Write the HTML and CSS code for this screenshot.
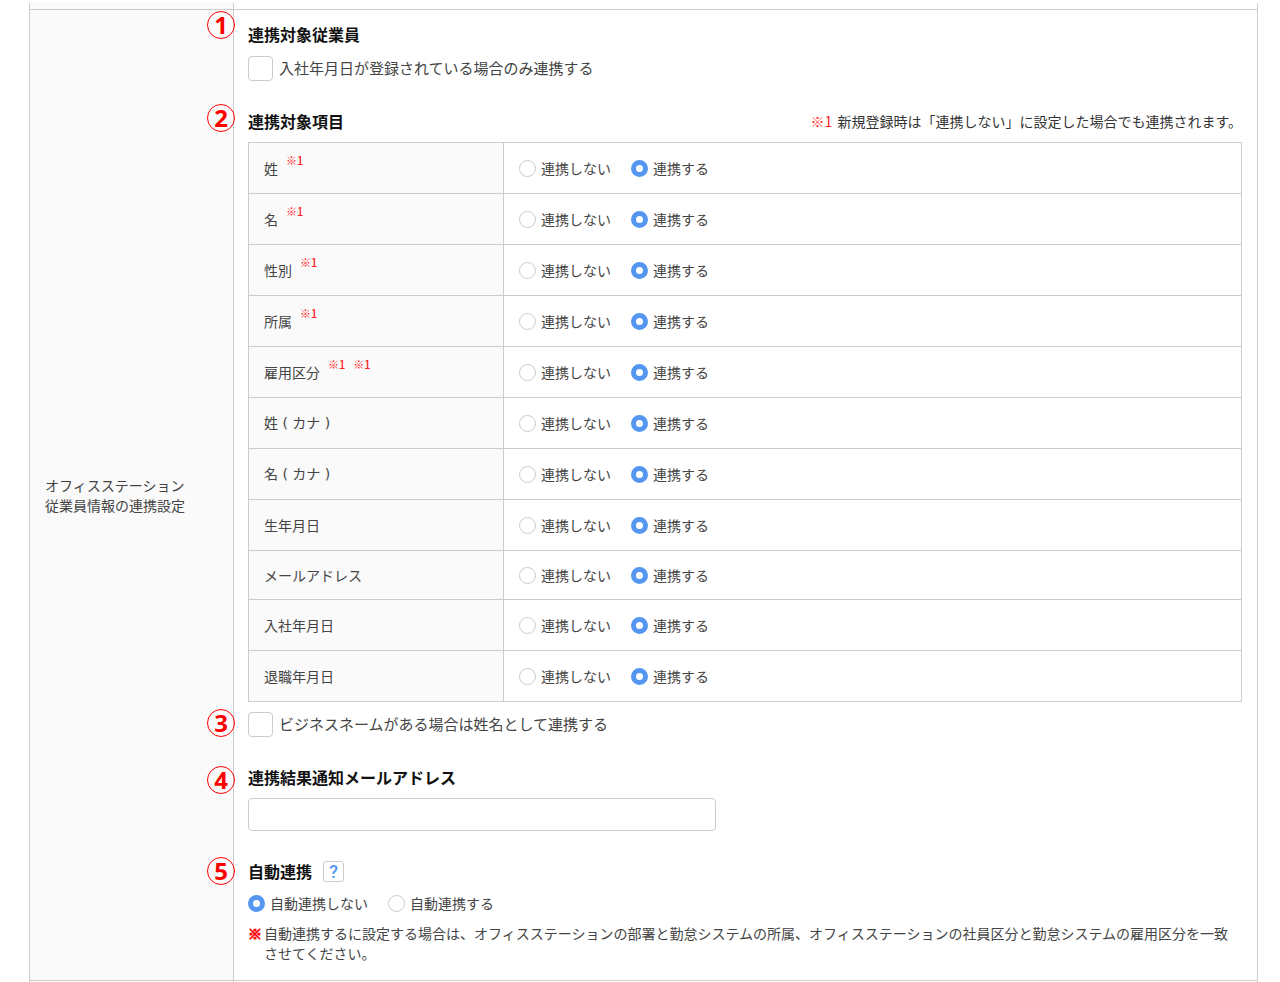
FILE: index.html
```html
<!DOCTYPE html>
<html lang="ja">
<head>
<meta charset="utf-8">
<meta name="viewport" content="width=device-width, initial-scale=1">
<title>オフィスステーション従業員情報の連携設定</title>
<link rel="stylesheet" href="styles.css">
</head>
<body>
<main class="settings">
  <div class="edge edge-top"><div class="edge-label"></div></div>
  <div class="row">
    <div class="row-label">オフィスステーション<br>従業員情報の連携設定</div>
    <div class="row-body">
      <section class="block">
        <span class="badge badge-raised">1</span>
        <h2 class="heading">連携対象従業員</h2>
        <label class="check"><input type="checkbox">入社年月日が登録されている場合のみ連携する</label>
      </section>

      <section class="block">
        <span class="badge badge-top">2</span>
        <div class="heading-row">
          <h2 class="heading">連携対象項目</h2>
          <p class="remark"><span class="red">※1</span> 新規登録時は「連携しない」に設定した場合でも連携されます。</p>
        </div>
        <table class="items">
          <tbody>
            <tr><th scope="row">姓<sup>※1</sup></th><td><div class="radios"><label class="radio"><input type="radio" name="sei">連携しない</label><label class="radio"><input type="radio" name="sei" checked>連携する</label></div></td></tr>
            <tr><th scope="row">名<sup>※1</sup></th><td><div class="radios"><label class="radio"><input type="radio" name="mei">連携しない</label><label class="radio"><input type="radio" name="mei" checked>連携する</label></div></td></tr>
            <tr><th scope="row">性別<sup>※1</sup></th><td><div class="radios"><label class="radio"><input type="radio" name="gender">連携しない</label><label class="radio"><input type="radio" name="gender" checked>連携する</label></div></td></tr>
            <tr><th scope="row">所属<sup>※1</sup></th><td><div class="radios"><label class="radio"><input type="radio" name="dept">連携しない</label><label class="radio"><input type="radio" name="dept" checked>連携する</label></div></td></tr>
            <tr><th scope="row">雇用区分<sup>※1</sup><sup>※1</sup></th><td><div class="radios"><label class="radio"><input type="radio" name="employment">連携しない</label><label class="radio"><input type="radio" name="employment" checked>連携する</label></div></td></tr>
            <tr><th class="kana" scope="row">姓 ( カナ )</th><td><div class="radios"><label class="radio"><input type="radio" name="sei-kana">連携しない</label><label class="radio"><input type="radio" name="sei-kana" checked>連携する</label></div></td></tr>
            <tr><th class="kana" scope="row">名 ( カナ )</th><td><div class="radios"><label class="radio"><input type="radio" name="mei-kana">連携しない</label><label class="radio"><input type="radio" name="mei-kana" checked>連携する</label></div></td></tr>
            <tr><th scope="row">生年月日</th><td><div class="radios"><label class="radio"><input type="radio" name="birth">連携しない</label><label class="radio"><input type="radio" name="birth" checked>連携する</label></div></td></tr>
            <tr class="compact"><th scope="row">メールアドレス</th><td><div class="radios"><label class="radio"><input type="radio" name="mail">連携しない</label><label class="radio"><input type="radio" name="mail" checked>連携する</label></div></td></tr>
            <tr><th scope="row">入社年月日</th><td><div class="radios"><label class="radio"><input type="radio" name="joined">連携しない</label><label class="radio"><input type="radio" name="joined" checked>連携する</label></div></td></tr>
            <tr><th scope="row">退職年月日</th><td><div class="radios"><label class="radio"><input type="radio" name="left">連携しない</label><label class="radio"><input type="radio" name="left" checked>連携する</label></div></td></tr>
          </tbody>
        </table>
        <div class="business">
          <span class="badge">3</span>
          <label class="check"><input type="checkbox">ビジネスネームがある場合は姓名として連携する</label>
        </div>
      </section>

      <section class="block">
        <span class="badge badge-low">4</span>
        <h2 class="heading"><label for="notify">連携結果通知メールアドレス</label></h2>
        <input class="text" id="notify" type="email">
      </section>

      <section class="block">
        <span class="badge">5</span>
        <div class="heading-row heading-help">
          <h2 class="heading">自動連携</h2>
          <button class="help" type="button">?</button>
        </div>
        <div class="radios">
          <label class="radio"><input type="radio" name="auto" checked>自動連携しない</label>
          <label class="radio"><input type="radio" name="auto">自動連携する</label>
        </div>
        <p class="caution"><b class="mark">※</b><span>自動連携するに設定する場合は、オフィスステーションの部署と勤怠システムの所属、オフィスステーションの社員区分と勤怠システムの雇用区分を一致させてください。</span></p>
      </section>
    </div>
  </div>
  <div class="edge"><div class="edge-label"></div></div>
</main>
</body>
</html>
```

FILE: styles.css
```css
* {
  box-sizing: border-box;
}

body {
  margin: 0;
  background: #fff;
  color: #444;
  font: 14px/20px "Noto Sans CJK JP", sans-serif;
}

h2,
p {
  margin: 0;
}

.settings {
  margin: 3px 22px 0 29px;
  border: solid #ccc;
  border-width: 0 1px;
}

.edge,
.row {
  display: grid;
  grid-template-columns: 204px 1fr;
}

.edge {
  height: 2px;
}

.edge-top {
  height: 6px;
}

.edge-label,
.row-label {
  border-right: 1px solid #ccc;
  background: #fafafa;
}

.row {
  border: solid #ccc;
  border-width: 1px 0;
}

.row-label {
  display: flex;
  align-items: center;
  padding-left: 15px;
}

.row-body {
  display: grid;
  gap: 28px;
  padding: 12px 15px 17px 14px;
}

.block,
.business {
  position: relative;
}

.heading {
  color: #111;
  font-size: 16px;
  font-weight: 700;
  line-height: 24px;
  margin-bottom: 9px;
}

.heading-row {
  display: flex;
  justify-content: space-between;
}

.heading-help {
  justify-content: flex-start;
  gap: 11px;
  margin-bottom: 1px;
}

.remark {
  color: #333;
  line-height: 24px;
}

.red,
sup {
  color: #f22;
}

.red {
  margin-right: 2px;
}

/* Numbered callouts laid over the column border */
.badge {
  position: absolute;
  top: -2px;
  left: -41px;
  width: 28px;
  height: 28px;
  border: 1px solid #f00;
  border-radius: 50%;
  color: #f00;
  font: 700 24px/26px "Noto Sans", sans-serif;
  text-align: center;
}

.badge-top {
  top: -5px;
}

.badge-raised {
  top: -11px;
}

.badge-low {
  top: 1px;
}

.check {
  display: flex;
  align-items: center;
  gap: 6px;
  height: 26px;
  width: fit-content;
  font-size: 15px;
}

.check input {
  appearance: none;
  flex: none;
  width: 25px;
  height: 25px;
  margin: 0;
  border: 1px solid #ccc;
  border-radius: 4px;
  background: #fff;
}

.check input:checked {
  background: #5596f0;
}

.items {
  width: 100%;
  border-collapse: collapse;
  table-layout: fixed;
}

.items th,
.items td {
  height: 51px;
  padding: 0 15px;
  border: 1px solid #ccc;
  text-align: left;
  font-weight: 400;
}

.items th {
  width: 255px;
  background: #fafafa;
}

.items .kana {
  font-family: "DejaVu Sans", "Noto Sans CJK JP", sans-serif;
}

.items .compact th,
.items .compact td {
  height: 49px;
}

sup {
  margin-left: 8px;
  font-size: 11px;
  font-weight: 500;
  line-height: 0;
  vertical-align: 9px;
}

.radios {
  display: flex;
  gap: 20px;
}

.radio {
  display: flex;
  align-items: center;
  gap: 5px;
}

.radio input {
  appearance: none;
  flex: none;
  width: 17px;
  height: 17px;
  margin: 0;
  border: 1px solid #ccc;
  border-radius: 50%;
  background: #fff;
}

.radio input:checked {
  border: 5px solid #5596f0;
}

.business {
  margin-top: 9px;
}

.text {
  display: block;
  width: 468px;
  max-width: 100%;
  height: 33px;
  padding: 0 8px;
  border: 1px solid #ccc;
  border-radius: 4px;
  background: #fff;
  font: inherit;
}

.help {
  width: 21px;
  height: 21px;
  margin: 2px 0 0;
  padding: 0;
  border: 1px solid #ccc;
  border-radius: 3px;
  background: #fff;
  color: #5596f0;
  font: 500 18px/19px Roboto, sans-serif;
}

.caution {
  display: grid;
  grid-template-columns: 16px 1fr;
  margin-top: 10px;
}

.mark {
  color: #f00;
  -webkit-text-stroke: 1px #f00;
}
```
